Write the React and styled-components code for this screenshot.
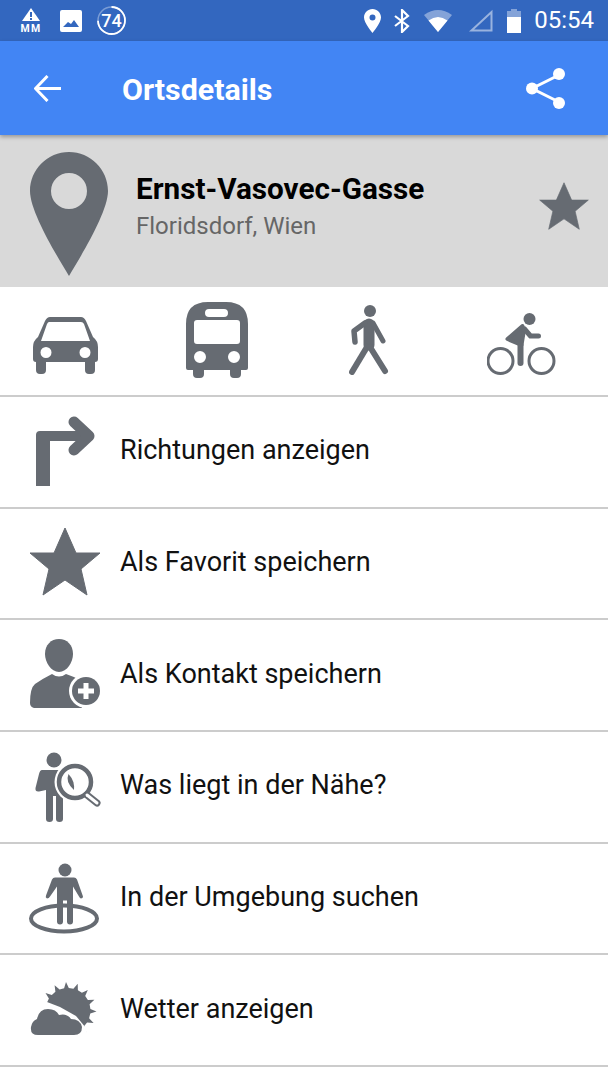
import React from "react";
import styled, { createGlobalStyle } from "styled-components";

const GREY = "#666b72";

const Global = createGlobalStyle`
  html, body {
    margin: 0;
    padding: 0;
    background: #fff;
    font-family: Roboto, "Noto Sans", sans-serif;
  }
`

const Page = styled.div`
  width: 608px;
  height: 1080px;
  overflow: hidden;
  background: #fff;
`

const StatusBar = styled.div`
  height: 41px;
  background: #3367bf;
  display: flex;
  align-items: center;
  padding: 0 14px 0 20px;
  color: #fff;
`

const StatusGroup = styled.div`
  display: flex;
  align-items: center;
  margin-left: ${p => (p.$right ? "auto" : "0")};
`

const StatusSlot = styled.div`
  display: flex;
  margin-left: ${p => p.$gap || 0}px;
`

const WarnIcon = styled.div`
  width: 21px;
  display: flex;
  flex-direction: column;
  align-items: center;
`

const WarnLabel = styled.span`
  font-size: 10.5px;
  line-height: 9px;
  font-weight: 700;
  letter-spacing: 1.2px;
  margin-top: 3px;
  margin-right: -1px;
`

const Clock = styled.span`
  font-size: 24px;
  margin-left: 13px;
  line-height: 41px;
`

const Ring = styled.div`
  position: relative;
  width: 29px;
  height: 29px;
  margin-left: 15px;
`

const RingValue = styled.span`
  position: absolute;
  inset: 0;
  display: flex;
  align-items: center;
  justify-content: center;
  font-size: 18px;
  font-weight: 500;
`

const AppBar = styled.header`
  height: 94px;
  background: #4285f4;
  display: flex;
  align-items: center;
  padding: 0 43px 0 34px;
  color: #fff;
  position: relative;
  z-index: 1;
  box-shadow: 0 2px 4px rgba(0, 0, 0, 0.3);
`

const Title = styled.h1`
  margin: 2px 0 0 61px;
  font-size: 30.4px;
  font-weight: 700;
  flex: 1;
`

const Place = styled.section`
  height: 152px;
  box-sizing: border-box;
  background: #d9d9d9;
  display: flex;
  align-items: flex-start;
  padding: 17px 19px 0 30px;
`

const PlaceText = styled.div`
  flex: 1;
  margin: 18px 0 0 28px;
`

const PlaceName = styled.div`
  font-size: 29.7px;
  line-height: 38px;
  font-weight: 700;
  color: #000;
`

const PlaceArea = styled.div`
  font-size: 24px;
  line-height: 36px;
  color: #666;
`

const PlaceStar = styled.div`
  display: flex;
  margin-top: 30px;
`

const Transport = styled.nav`
  display: grid;
  grid-template-columns: repeat(4, 130px);
  column-gap: 22px;
  align-items: end;
  border-bottom: 2px solid #ccc;
  padding-bottom: 17px;
  height: 91px;
`

const TransportCell = styled.div`
  display: flex;
  justify-content: center;
  align-items: flex-end;
  padding-bottom: ${p => p.$lift || 0}px;
`

const Row = styled.div`
  height: 109.67px;
  border-bottom: 2px solid #ccc;
  display: flex;
  align-items: center;
`

const RowIcon = styled.div`
  width: 120px;
  box-sizing: border-box;
  padding-left: 29px;
  display: flex;
  flex: none;
`

const RowLabel = styled.span`
  font-size: 27px;
  color: #111;
  margin-bottom: 3px;
`

const starPoints = "35,0 46,25 70,25 51,41 57,67 35,52 13,67 19,41 0,25 24,25"

const Star = ({ w, h }) => (
  <svg width={w} height={h} viewBox="-1 -1 72 69">
    <polygon points={starPoints} fill={GREY} stroke={GREY} strokeWidth="1" strokeLinejoin="round" />
  </svg>
)

// 15 spikes round a disc
const sunPoints = () => {
  const pts = []
  const at = (r, deg) => {
    const a = (deg - 90) * Math.PI / 180
    pts.push(`${(38 + r * Math.cos(a)).toFixed(1)},${(27.5 + r * Math.sin(a)).toFixed(1)}`)
  }
  for (let i = 0; i < 15; i++) {
    const d = i * 24 - 4
    at(22.5, d - 6)
    at(28.5, d)
    at(22.5, d + 6)
  }
  return pts.join(" ")
}

const rowIcons = {
  turn: (
    <svg width="72" height="72" viewBox="-7 0 72 72" fill={GREY}>
      <path d="M0 70V19q0-4 4-4H50V25H14V70Z" />
      <path d="M38 6L53 20L38 34" fill="none" stroke={GREY} strokeWidth="11" strokeLinecap="round" strokeLinejoin="round" />
    </svg>
  ),
  star: (
    <svg width="72" height="72" viewBox="0 -1 72 72">
      <polygon transform="translate(1 0)" points={starPoints} fill={GREY} stroke={GREY} strokeWidth="1" strokeLinejoin="round" />
    </svg>
  ),
  contact: (
    <svg width="72" height="72" viewBox="-1 0 72 72" fill={GREY}>
      <path d="M29 0C37 0 43 6 43 15C43 23 37 33 29 33C21 33 15 23 15 15C15 6 21 0 29 0Z" />
      <path d="M22 35Q29 40 36 35Q45 38 52 42V69H4Q0 68 0 64Q0 49 5 45Q12 40 22 35Z" />
      <circle cx="56" cy="52" r="17" fill="#fff" />
      <circle cx="56" cy="52" r="14" />
      <path d="M56 44V60M48 52H64" stroke="#fff" strokeWidth="5" />
    </svg>
  ),
  nearby: (
    <svg width="72" height="72" viewBox="-4 -1 72 72" fill={GREY}>
      <circle cx="21" cy="8" r="7.5" />
      <path d="M9 18H27V40H30V67Q30 70 26.5 70Q23 70 23 67V44H20V67Q20 70 16.5 70Q13 70 13 67V38L6 39.5Q2 40 2.5 36L6 22Q7 18 9 18Z" />
      <circle cx="42" cy="30" r="20.5" fill="#fff" />
      <circle cx="42" cy="30" r="16" fill="#fff" stroke={GREY} strokeWidth="4.5" />
      <path d="M35.5 22Q32 30 41 38Q42 29 35.5 22Z" />
      <path d="M54 43L64 51" stroke={GREY} strokeWidth="7" strokeLinecap="round" />
      <path d="M54 43L64 51" stroke="#fff" strokeWidth="3" strokeLinecap="round" />
    </svg>
  ),
  around: (
    <svg width="72" height="72" viewBox="0 -1.5 72 72" fill={GREY}>
      <ellipse cx="35" cy="55" rx="33" ry="13" fill="none" stroke={GREY} strokeWidth="4" />
      <circle cx="36" cy="6.5" r="6.5" />
      <path d="M26 14H45Q47 14 48 16L54 33Q54 35 52 35Q51 35 50 33L44 23V58Q44 61 41 61Q38 61 38 58V37H34V58Q34 61 31 61Q28 61 28 58V23L21 33Q20 35 18 35Q16 34 17 32L23 16Q24 14 26 14Z" />
    </svg>
  ),
  weather: (
    <svg width="72" height="72" viewBox="-1 -9 72 72" fill={GREY}>
      <polygon points={sunPoints()} />
      <path d="M0 14L17 19L30 24L46 33L56 45L58 60H0Z" fill="#fff" />
      <path d="M8 52Q0 52 1 44Q2 38 7 36Q9 26 18 26Q26 26 29 32Q37 30 41 36Q50 36 52 44Q52 52 44 52Z" />
    </svg>
  ),
}

const rows = [
  ["turn", "Richtungen anzeigen"],
  ["star", "Als Favorit speichern"],
  ["contact", "Als Kontakt speichern"],
  ["nearby", "Was liegt in der Nähe?"],
  ["around", "In der Umgebung suchen"],
  ["weather", "Wetter anzeigen"],
]

function App() {
  return (
    <Page>
      <Global />
      <StatusBar>
        <StatusGroup>
          <WarnIcon>
            <svg width="18" height="13" viewBox="0 0 18 13">
              <path d="M9 0L18 13H0Z" fill="#fff" />
              <path d="M9 4V9M9 10V12" stroke="#3367bf" strokeWidth="2" />
            </svg>
            <WarnLabel>MM</WarnLabel>
          </WarnIcon>
          <StatusSlot $gap={19}>
            <svg width="22" height="22" viewBox="0 0 22 22">
              <path fillRule="evenodd" fill="#fff" d="M2 0H20Q22 0 22 2V20Q22 22 20 22H2Q0 22 0 20V2Q0 0 2 0ZM3 17H19L14 10L11 14L8 12Z" />
            </svg>
          </StatusSlot>
          <Ring>
            <svg width="29" height="29" viewBox="0 0 29 29">
              <circle cx="14.5" cy="14.5" r="13.5" fill="none" stroke="#fff" strokeOpacity="0.35" strokeWidth="1.5" />
              <circle cx="14.5" cy="14.5" r="13.5" fill="none" stroke="#fff" strokeWidth="1.8" strokeDasharray="63 22" transform="rotate(-90 14.5 14.5)" />
            </svg>
            <RingValue>74</RingValue>
          </Ring>
        </StatusGroup>
        <StatusGroup $right>
          <svg width="17" height="24" viewBox="0 0 17 24">
            <path fillRule="evenodd" fill="#fff" d="M8.5 0C3.8 0 0 3.8 0 8.5C0 14 8.5 24 8.5 24C8.5 24 17 14 17 8.5C17 3.8 13.2 0 8.5 0ZM8.5 5.5A3 3 0 1 1 8.5 11.5A3 3 0 1 1 8.5 5.5Z" />
          </svg>
          <StatusSlot $gap={13}>
            <svg width="16" height="24" viewBox="0 0 16 24">
              <path d="M1 7L14 17L8 23V1L14 7L1 17" fill="none" stroke="#fff" strokeWidth="2.2" />
            </svg>
          </StatusSlot>
          <StatusSlot $gap={14}>
            <svg width="28" height="23" viewBox="0 0 28 23">
              <path d="M0 6Q14 -4 28 6L14 23Z" fill="#fff" fillOpacity="0.4" />
              <path d="M4.5 11.5Q14 4.5 23.5 11.5L14 23Z" fill="#fff" />
            </svg>
          </StatusSlot>
          <StatusSlot $gap={16}>
            <svg width="25" height="23" viewBox="0 0 25 23">
              <path d="M23.5 3V21.5H3.5Z" fill="none" stroke="#fff" strokeOpacity="0.5" strokeWidth="2" />
            </svg>
          </StatusSlot>
          <StatusSlot $gap={14}>
            <svg width="14" height="24" viewBox="0 0 14 24">
              <path d="M4 0H10V2H14V8H0V2H4Z" fill="#fff" fillOpacity="0.4" />
              <path d="M0 8H14V24H0Z" fill="#fff" />
            </svg>
          </StatusSlot>
          <Clock>05:54</Clock>
        </StatusGroup>
      </StatusBar>
      <AppBar>
        <svg width="27" height="27" viewBox="0 0 27 27">
          <path d="M27 13.5H2M13.5 1L1.5 13.5L13.5 26" fill="none" stroke="#fff" strokeWidth="3" />
        </svg>
        <Title>Ortsdetails</Title>
        <svg width="39" height="41" viewBox="0 0 39 41">
          <path d="M33 7L6 20.5L33 34" fill="none" stroke="#fff" strokeWidth="3" />
          <circle cx="33" cy="6" r="6" fill="#fff" />
          <circle cx="6" cy="20.5" r="6" fill="#fff" />
          <circle cx="33" cy="35" r="6" fill="#fff" />
        </svg>
      </AppBar>
      <Place>
        <svg width="78" height="124" viewBox="0 0 78 124">
          <path fillRule="evenodd" fill={GREY} d="M39 0C17.5 0 0 17.5 0 39C0 60 27 104 39 124C51 104 78 60 78 39C78 17.5 60.5 0 39 0ZM39 21A18 18 0 1 1 39 57A18 18 0 1 1 39 21Z" />
        </svg>
        <PlaceText>
          <PlaceName>Ernst-Vasovec-Gasse</PlaceName>
          <PlaceArea>Floridsdorf, Wien</PlaceArea>
        </PlaceText>
        <PlaceStar>
          <Star w={50} h={48} />
        </PlaceStar>
      </Place>
      <Transport>
        <TransportCell $lift={4}>
          <svg width="65" height="57" viewBox="0 0 65 57">
            <path fillRule="evenodd" fill={GREY} d="M17 0H48Q51 0 53 4L60 20Q65 24 65 30V42Q65 45 62 45V53Q62 57 58 57H56Q52 57 52 53V45H13V53Q13 57 9 57H7Q3 57 3 53V45Q0 45 0 42V30Q0 24 5 20L12 4Q14 0 17 0ZM16 5Q15 5 14 7L8 24H57L51 7Q50 5 48 5ZM13 30A5.5 5.5 0 1 0 13 41A5.5 5.5 0 1 0 13 30ZM52 30A5.5 5.5 0 1 0 52 41A5.5 5.5 0 1 0 52 30Z" />
          </svg>
        </TransportCell>
        <TransportCell>
          <svg width="62" height="76" viewBox="0 0 62 76">
            <path fillRule="evenodd" fill={GREY} d="M22 0H40Q62 0 62 22V66Q62 68 60 68H55V72Q55 76 51 76H48Q44 76 44 72V68H18V72Q18 76 14 76H11Q7 76 7 72V68H2Q0 68 0 66V22Q0 0 22 0ZM23 7Q19 7 19 11Q19 15 23 15H38Q42 15 42 11Q42 7 38 7ZM11 18Q8 18 8 21V39Q8 42 11 42H51Q54 42 54 39V21Q54 18 51 18ZM14 49A6 6 0 1 0 14 61A6 6 0 1 0 14 49ZM48 49A6 6 0 1 0 48 61A6 6 0 1 0 48 49Z" />
          </svg>
        </TransportCell>
        <TransportCell $lift={3}>
          <svg width="40" height="70" viewBox="0 0 40 70" fill="none" stroke={GREY} strokeLinecap="round" strokeLinejoin="round">
            <circle cx="21" cy="6" r="6" fill={GREY} stroke="none" />
            <path d="M20 19V40" strokeWidth="11" />
            <path d="M16 18L5 26L6 37" strokeWidth="5.5" />
            <path d="M24 18L34 36" strokeWidth="5" />
            <path d="M18 42L3 67" strokeWidth="6" />
            <path d="M21 42L36 66" strokeWidth="6" />
          </svg>
        </TransportCell>
        <TransportCell $lift={3}>
          <svg width="69" height="62" viewBox="0.5 0 69 62" fill="none" stroke={GREY} strokeLinecap="round" strokeLinejoin="round">
            <circle cx="14" cy="48" r="12.5" strokeWidth="3" />
            <circle cx="55" cy="48" r="12.5" strokeWidth="3" />
            <circle cx="43" cy="6" r="6" fill={GREY} stroke="none" />
            <path d="M36 13L21 26L35 32L37 20Z" fill={GREY} strokeWidth="4" />
            <path d="M34 32V50" strokeWidth="6" />
            <path d="M38 16L44 23H52" strokeWidth="5" />
          </svg>
        </TransportCell>
      </Transport>
      {rows.map(([icon, label]) => (
        <Row key={icon}>
          <RowIcon>{rowIcons[icon]}</RowIcon>
          <RowLabel>{label}</RowLabel>
        </Row>
      ))}
    </Page>
  )
}

export default App
